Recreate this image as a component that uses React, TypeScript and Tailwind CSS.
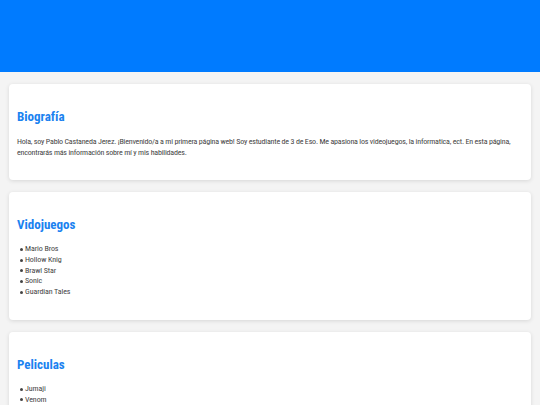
import React from "react";

const videojuegos = ["Mario Bros", "Hollow Knig", "Brawl Star", "Sonic", "Guardian Tales"];
const peliculas = ["Jumaji", "Venom"];

const Card: React.FC<{ title: string; children: React.ReactNode }> = ({ title, children }) => (
  <section className="bg-white rounded-[4px] shadow-[0_1px_4px_rgba(0,0,0,0.12)] px-[8px] pt-[25px] pb-[22px]">
    <h2 className="text-[13px] leading-[16px] font-bold text-[#1a82f0] mb-[11px]">{title}</h2>
    {children}
  </section>
);

const List: React.FC<{ items: string[] }> = ({ items }) => (
  <ul className="text-[8px] leading-[10.75px] tracking-[-0.1px]">
    {items.map((item) => (
      <li key={item} className="flex items-center gap-[2px] pl-[3px]">
        <span className="w-[3px] h-[3px] rounded-full bg-[#444]" />
        {item}
      </li>
    ))}
  </ul>
);

export default function App() {
  return (
    <div className="min-h-screen bg-[#f4f4f4] text-[#444] font-['Roboto',sans-serif] font-stretch-75%">
      <header className="h-[72px] bg-[#007bff]" />
      <main className="px-[9px] pt-[12px] flex flex-col gap-[12px]">
        <Card title="Biografía">
          <p className="text-[8px] leading-[11px] tracking-[-0.2px]">
            Hola, soy Pablo Castaneda Jerez. ¡Bienvenido/a a mi primera página web! Soy estudiante de 3 de Eso. Me
            apasiona los videojuegos, la informatica, ect. En esta página, encontrarás más información sobre mí y mis
            habilidades.
          </p>
        </Card>
        <Card title="Vidojuegos">
          <List items={videojuegos} />
        </Card>
        <Card title="Peliculas">
          <List items={peliculas} />
        </Card>
      </main>
    </div>
  );
}
